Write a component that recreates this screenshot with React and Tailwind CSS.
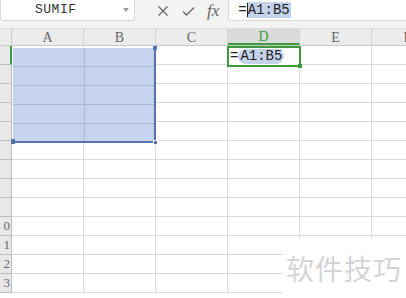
import React from 'react';

const cols = ['A', 'B', 'C', 'D', 'E', 'F'];
const rows = [1, 2, 3, 4, 5, 6, 7, 8, 9, 10, 11, 12, 13];

export default function App() {
    return (
        <div className="relative w-[406px] h-[298px] overflow-hidden bg-white" style={{ fontFamily: '"Liberation Serif", serif' }}>
            {/* formula bar */}
            <div className="flex items-start h-[29px] bg-[#f3f3f3] border-b border-[#dcdcdc]">
                <div className="relative w-[135px] h-[21px] bg-white border border-t-0 border-[#d9d9d9] rounded-b-[3px] flex items-center">
                    <span className="ml-[34px] text-[13px] text-[#333] tracking-[0.5px]" style={{ fontFamily: '"Liberation Mono", monospace' }}>SUMIF</span>
                    <span className="absolute right-[5px] top-[8px] w-0 h-0 border-l-[3px] border-r-[3px] border-t-[4px] border-l-transparent border-r-transparent border-t-[#999]" />
                </div>
                <div className="flex items-center h-[21px] ml-[21px] gap-[11px] text-[#666]">
                    <svg width="14" height="14" viewBox="0 0 14 14"><path d="M2.5 2.5 L11.5 11.5 M11.5 2.5 L2.5 11.5" stroke="#666" strokeWidth="1.3" fill="none" /></svg>
                    <svg width="15" height="14" viewBox="0 0 15 14"><path d="M2 7.5 L5.5 11 L13 3.5" stroke="#666" strokeWidth="1.3" fill="none" /></svg>
                    <span className="italic text-[17px] leading-none">fx</span>
                </div>
                <div className="flex-1 h-[21px] ml-[9px] bg-white border border-t-0 border-r-0 border-[#d9d9d9] rounded-bl-[3px] flex items-center pl-[9px] text-[14px] text-[#222]" style={{ fontFamily: '"Liberation Mono", monospace' }}>
                    <span>=</span>
                    <span className="relative bg-[#c5d2ec] px-[1px] leading-[16px]">
                        <span className="absolute left-0 top-[1px] w-[1px] h-[14px] bg-[#222]" />
                        A1:B5
                    </span>
                </div>
            </div>

            {/* column headers */}
            <div className="flex h-[17px] bg-[#ececec] border-b border-[#c9c9c9]">
                <div className="w-[12px] shrink-0 border-r border-[#c9c9c9] relative">
                    <span className="absolute right-[2px] bottom-[2px] w-0 h-0 border-l-[8px] border-t-[8px] border-l-transparent border-t-transparent border-b-[#cfcfcf] border-r-[#cfcfcf]" style={{ borderBottomWidth: 0 }} />
                </div>
                {cols.map((c) => (
                    <div key={c} className={`w-[72px] shrink-0 border-r border-[#d5d5d5] flex items-center justify-center text-[14px] ${c === 'D' ? 'bg-[#dadada] text-[#3c9a3c] border-b-2 border-b-[#3c9a3c]' : 'text-[#666]'}`}>{c}</div>
                ))}
            </div>

            {/* grid */}
            <div className="flex flex-col">
                {rows.map((r) => (
                    <div key={r} className="flex h-[19px]">
                        <div className={`relative w-[12px] shrink-0 overflow-hidden border-r border-b border-[#bdbdbd] bg-[#e8e8e8] text-[13px] text-[#666] ${r === 1 ? 'border-r-2 border-r-[#3c9a3c]' : ''}`}>
                            <span className="absolute right-[1px] top-[1px] leading-[16px]">{r >= 10 ? String(r).slice(1) : ''}</span>
                        </div>
                        {cols.map((c) => (
                            <div key={c} className="w-[72px] shrink-0 border-r border-b border-[#d9d9d9]" />
                        ))}
                    </div>
                ))}
            </div>

            {/* selected range A1:B5 */}
            <div className="absolute left-[12px] top-[47px] w-[144px] h-[96px] bg-[#c6d3ef] border-r-2 border-b-2 border-[#5573ae] border-t border-l border-t-white border-l-white">
                <div className="absolute left-[71px] top-0 w-px h-full bg-[#a9b7d3]" />
                {[18, 37, 56, 75].map((y) => (
                    <div key={y} className="absolute left-0 w-full h-px bg-[#a9b7d3]" style={{ top: y }} />
                ))}
                <span className="absolute right-[-3px] top-[-2px] w-[4px] h-[4px] bg-[#5573ae]" />
                <span className="absolute left-[-2px] bottom-[-3px] w-[4px] h-[5px] bg-[#5573ae]" />
                <span className="absolute right-[-4px] bottom-[-4px] w-[5px] h-[5px] bg-[#5573ae] border border-white" />
            </div>

            {/* active cell D1 */}
            <div className="absolute left-[227px] top-[46px] w-[74px] h-[21px] border-2 border-[#3c9a3c] bg-white flex items-center pl-[1px] text-[14px] text-[#222]" style={{ fontFamily: '"Liberation Mono", monospace' }}>
                <span>=</span>
                <span className="bg-[#c5d2ec] rounded-full px-[2px] leading-[15px]">A1:B5</span>
                <span className="absolute right-[-3px] bottom-[-3px] w-[4px] h-[4px] bg-[#3c9a3c]" />
            </div>

            {/* watermark */}
            <div className="absolute left-[283px] top-[238px] w-[123px] h-[60px] bg-white flex items-center justify-end pr-[4px]">
                <span className="text-[28px] text-[#d4d4d4] tracking-[1px]" style={{ fontFamily: '"Noto Sans CJK SC", sans-serif' }}>软件技巧</span>
            </div>
        </div>
    );
}
